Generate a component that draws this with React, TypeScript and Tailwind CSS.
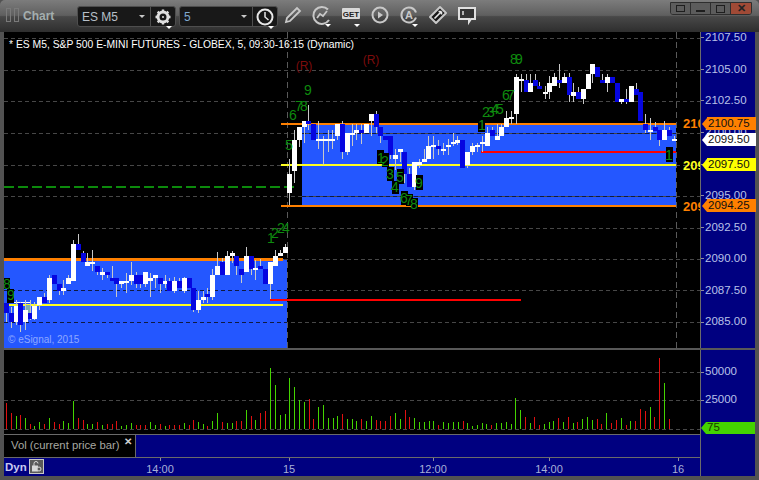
import React from "react";

type C = [number, number, number, number, number, "w" | "b"];

// x in 3x crop coordinates, y in 3x crop coordinates
const left: C[] = [
  [18,218,248,218,275,"b"],[32,248,275,230,295,"b"],[47,228,275,210,285,"w"],[61,220,285,215,305,"b"],[76,240,275,210,300,"w"],[90,250,267,210,270,"b"],[103,228,267,215,270,"w"],[118,202,226,202,240,"w"],[133,202,218,190,218,"b"],[148,145,210,135,218,"w"],[163,135,162,135,162,"b"],[176,162,182,162,195,"b"],[190,175,182,150,195,"w"],[205,145,162,135,162,"w"],[220,42,152,30,152,"w"],[235,42,60,12,60,"b"],[248,70,95,62,95,"b"],[262,97,107,70,107,"w"],[277,95,100,60,122,"w"],[292,108,125,108,135,"b"],[307,125,135,115,150,"w"],[321,125,135,125,145,"b"],[335,145,152,108,152,"b"],[349,145,162,145,200,"b"],[364,152,162,152,175,"w"],[379,152,158,130,190,"w"],[393,135,152,97,165,"w"],[407,135,162,125,175,"b"],[421,135,162,135,175,"b"],[436,127,162,127,170,"w"],[451,145,152,130,200,"w"],[466,135,143,135,175,"w"],[480,145,162,145,190,"b"],[494,152,162,135,175,"w"],[508,152,182,145,182,"b"],[523,152,182,140,190,"w"],[537,152,175,145,175,"b"],[552,145,182,140,190,"w"],[566,145,175,145,175,"b"],[580,175,240,175,245,"b"],[595,210,240,182,248,"w"],[610,202,210,182,218,"w"],[622,192,200,175,218,"b"],[637,135,200,118,210,"w"],[652,108,135,65,135,"w"],[667,97,135,85,135,"b"],[682,78,135,62,135,"w"],[695,70,78,62,100,"w"],[709,78,108,78,135,"b"],[723,118,135,118,160,"b"],[739,78,125,50,125,"w"],[753,78,118,78,135,"b"],[766,113,120,90,150,"w"],[781,108,118,88,118,"b"],[796,118,162,118,162,"b"],[811,97,162,97,210,"w"],[826,78,108,60,108,"w"],[840,70,78,60,78,"w"],[854,52,70,42,70,"w"],
];
const mid: C[] = [
  [58,372,430,327,466,"w"],[73,270,363,240,400,"w"],[88,232,270,232,290,"w"],[103,213,232,213,278,"w"],[115,213,222,165,240,"b"],[130,222,270,222,270,"b"],[145,267,273,213,297,"w"],[160,267,273,259,345,"w"],[175,267,273,240,306,"w"],[187,267,273,240,297,"w"],[202,222,258,222,270,"w"],[217,222,306,213,327,"b"],[232,249,306,249,315,"w"],[247,249,255,222,288,"w"],[259,240,249,222,270,"w"],[274,240,249,222,282,"b"],[289,222,249,222,249,"w"],[304,192,213,192,258,"w"],[319,192,231,183,249,"b"],[331,231,258,231,279,"b"],[346,258,270,258,270,"b"],[361,258,315,258,327,"b"],[376,315,327,297,360,"w"],[391,297,306,297,336,"w"],[403,306,372,306,400,"b"],[418,372,411,354,411,"b"],[433,336,411,336,420,"w"],[448,336,345,327,354,"w"],[463,327,336,297,336,"w"],[475,288,327,258,327,"w"],[490,285,291,258,327,"w"],[505,288,297,270,315,"b"],[520,297,303,279,315,"w"],[535,285,291,267,315,"w"],[550,276,282,249,288,"w"],[562,270,279,258,285,"w"],[577,270,354,270,354,"b"],[592,306,345,306,354,"w"],
];
const right: C[] = [
  [7,288,306,280,315,"w"],[22,285,291,279,306,"w"],[35,276,282,258,306,"w"],[50,249,288,231,288,"w"],[65,240,258,231,258,"b"],[80,258,270,222,270,"w"],[94,231,258,222,258,"w"],[107,204,231,183,231,"w"],[122,201,207,183,222,"w"],[137,81,192,72,222,"w"],[152,87,93,72,125,"w"],[167,90,125,72,125,"b"],[179,99,125,72,125,"w"],[194,90,108,72,108,"b"],[208,108,117,95,117,"b"],[224,126,132,108,147,"w"],[238,99,126,78,147,"w"],[251,81,108,70,108,"w"],[266,90,99,42,115,"b"],[281,81,99,70,99,"w"],[296,81,135,70,155,"b"],[310,126,138,99,155,"w"],[323,126,147,110,147,"b"],[338,117,147,117,162,"w"],[353,72,117,72,117,"w"],[367,42,72,42,99,"w"],[382,51,81,51,81,"b"],[395,90,99,72,99,"b"],[410,81,99,72,125,"w"],[425,81,99,81,99,"b"],[440,99,155,99,155,"b"],[453,147,155,147,162,"w"],[467,147,155,117,162,"b"],[482,108,155,108,155,"w"],[497,117,135,99,135,"b"],[511,126,213,126,213,"b"],[526,222,240,192,249,"b"],[541,240,246,204,270,"w"],[554,231,243,216,243,"b"],[568,240,270,240,288,"b"],[583,240,270,213,270,"w"],[598,240,258,231,258,"b"],[612,267,273,258,273,"w"],
];

const Candles = ({ data, ox, oy }: { data: C[]; ox: number; oy: number }) => (
  <>
    {data.map(([zx, t, b, wt, wb, c], i) => {
      const x = ox + Math.round(zx / 3);
      const top = oy + Math.round(t / 3);
      const bot = oy + Math.round(b / 3);
      return (
        <g key={i}>
          <rect x={x} y={oy + wt / 3} width={1} height={(wb - wt) / 3} fill="#c8c8c8" />
          <rect x={x - 2} y={top} width={5} height={Math.max(2, bot - top)} fill={c === "w" ? "#ffffff" : "#0606e0"} />
        </g>
      );
    })}
  </>
);

const boxes: [number, number, number, number][] = [
  [377,150,7,14],[382,153,7,14],[387,167,7,14],[397,169,7,15],[392,181,7,13],[416,175,7,15],[401,191,7,14],[406,194,7,12],[411,198,7,11],[478,120,7,12],[666,147,7,15],[4,278,6,11],[7,289,7,14],
];
const digits: [string, number, number][] = [
  ["9",308,95],["7",299,111],["8",304,111],["6",293,120],["5",289,150],["1",381,163],["2",385,166],["3",390,179],["5",400,182],["4",395,192],["9",419,188],["6",404,203],["7",409,205],["8",414,209],["1",482,130],["1",669,160],["2",486,117],["3",491,117],["4",495,114],["5",500,114],["6",506,100],["7",511,100],["8",514,64],["9",519,64],["8",7,289],["9",11,300],["1",271,243],["2",275,238],["2",281,233],["4",286,233],
];

const grid = [38, 70, 101, 133, 165, 196, 228, 259, 290, 322];

const MainChart = () => (
  <svg viewBox="4 32 696 316" width={696} height={316} shapeRendering="crispEdges" className="block">
    <rect x={4} y={32} width={696} height={316} fill="#000" />
    <rect x={4} y={259} width={283} height={89} fill="#2457ff" />
    <rect x={302} y={124} width={374} height={82} fill="#2457ff" />
    {grid.map((y) => (
      <line key={y} x1={4} x2={700} y1={y + 0.5} y2={y + 0.5} stroke="#474747" strokeDasharray="4 3" />
    ))}
    {[290, 322].map((y) => (
      <line key={y} x1={4} x2={287} y1={y + 0.5} y2={y + 0.5} stroke="#101a40" strokeDasharray="4 3" />
    ))}
    {[133, 196].map((y) => (
      <line key={y} x1={302} x2={676} y1={y + 0.5} y2={y + 0.5} stroke="#101a40" strokeDasharray="4 3" />
    ))}
    {[287, 676].map((x) => (
      <line key={x} x1={x + 0.5} x2={x + 0.5} y1={32} y2={348} stroke="#5a5a5a" strokeDasharray="6 4" />
    ))}
    <line x1={4} x2={295} y1={187} y2={187} stroke="#0c8a0c" strokeWidth={2} strokeDasharray="10 4" />
    <rect x={4} y={258} width={279} height={3} fill="#ff8000" />
    <rect x={281} y={123} width={395} height={2} fill="#ff8000" />
    <rect x={281} y={205} width={395} height={2} fill="#ff8000" />
    <rect x={9} y={304} width={274} height={2} fill="#ffff20" />
    <rect x={281} y={164} width={395} height={2} fill="#ffff20" />
    <rect x={481} y={151} width={195} height={2} fill="#ff0000" />
    <rect x={7} y={302} width={23} height={1} fill="#ffffff" />
    <rect x={25} y={305} width={5} height={8} fill="#7fb0b0" />
    <Candles data={left} ox={0} oy={230} />
    <Candles data={mid} ox={270} oy={50} />
    <Candles data={right} ox={470} oy={50} />
    <rect x={270} y={299} width={251} height={2} fill="#ff0000" />
    {boxes.map(([x, y, w, h], i) => (
      <rect key={i} x={x} y={y} width={w} height={h} fill="#000" />
    ))}
    <g shapeRendering="auto" fill="#0e8a0e" fontSize={14} textAnchor="middle">
      {digits.map(([d, x, y], i) => (
        <text key={i} x={x} y={y}>{d}</text>
      ))}
    </g>
    <g shapeRendering="auto">
      <text x={304} y={70} fill="#7d0c0c" fontSize={12} textAnchor="middle">(R)</text>
      <text x={371} y={64} fill="#7d0c0c" fontSize={12} textAnchor="middle">(R)</text>
      <text x={9} y={48} fill="#ffffff" fontSize={11} textLength={345} lengthAdjust="spacingAndGlyphs">* ES M5, S&amp;P 500 E-MINI FUTURES - GLOBEX, 5, 09:30-16:15 (Dynamic)</text>
      <text x={8} y={343} fill="#8fa8ff" fontSize={10}>© eSignal, 2015</text>
      <text x={683} y={128} fill="#ff8000" fontSize={13} fontWeight={700}>2100</text>
      <text x={683} y={170} fill="#ffff20" fontSize={13} fontWeight={700}>2097</text>
      <text x={683} y={211} fill="#ff8000" fontSize={13} fontWeight={700}>2094</text>
    </g>
  </svg>
);

type V = [number, number, "r" | "g"];
const vol1: V[] = [
  [19,160,"r"],[32,190,"r"],[47,198,"g"],[61,196,"r"],[76,205,"g"],[91,222,"r"],[103,228,"g"],[118,217,"g"],[133,222,"r"],[148,205,"g"],[163,217,"r"],[176,222,"r"],[190,213,"g"],[205,220,"g"],[220,153,"g"],[235,205,"r"],[248,211,"r"],[262,222,"g"],[277,222,"g"],[292,216,"r"],[307,225,"g"],[322,222,"r"],[335,222,"r"],[349,213,"r"],[364,228,"g"],[379,225,"g"],[393,219,"g"],[407,225,"r"],[421,225,"r"],[436,225,"r"],[451,216,"g"],[466,225,"g"],[480,222,"r"],[494,228,"g"],[508,225,"r"],[523,225,"r"],[537,225,"r"],[552,219,"g"],[566,225,"r"],[580,210,"r"],[595,216,"g"],[610,222,"g"],[622,228,"r"],[637,213,"g"],[652,190,"g"],[667,216,"r"],[682,219,"g"],[695,219,"g"],[709,213,"r"],[723,213,"r"],[739,180,"g"],[753,198,"r"],[766,210,"g"],[781,190,"r"],[796,183,"r"],[811,54,"g"],[826,105,"g"],[840,195,"g"],[854,192,"g"],[868,84,"g"],[883,111,"g"],[898,150,"g"],[913,156,"g"],[926,147,"r"],[940,207,"r"],[955,171,"g"],[970,165,"g"],[985,204,"g"],[998,204,"g"],[1012,198,"g"],[1027,192,"r"],[1042,207,"g"],[1056,207,"g"],[1069,213,"g"],[1084,207,"r"],[1098,213,"g"],[1114,198,"g"],[1128,210,"r"],
];
const vol2: V[] = [
  [1,213,"r"],[15,213,"r"],[31,198,"r"],[46,189,"g"],[61,207,"g"],[74,180,"r"],[88,201,"r"],[103,204,"g"],[118,216,"g"],[133,216,"g"],[146,213,"g"],[160,213,"g"],[175,225,"r"],[190,216,"g"],[205,219,"g"],[219,216,"g"],[233,216,"g"],[248,213,"r"],[262,219,"g"],[277,228,"g"],[292,225,"g"],[305,220,"g"],[319,222,"g"],[334,225,"r"],[349,219,"g"],[363,219,"g"],[377,216,"g"],[392,222,"g"],[406,144,"g"],[421,180,"g"],[436,201,"r"],[449,219,"g"],[463,201,"r"],[478,225,"r"],[493,222,"g"],[508,216,"g"],[520,213,"g"],[535,204,"r"],[550,216,"g"],[565,201,"r"],[580,219,"g"],[592,216,"r"],[607,207,"g"],[622,201,"g"],[637,210,"g"],[652,207,"r"],[664,222,"r"],[679,189,"g"],[694,219,"r"],[709,210,"r"],[724,204,"g"],[737,225,"r"],[751,213,"g"],[766,213,"r"],[781,177,"r"],[796,183,"r"],[811,171,"g"],[823,201,"r"],[838,24,"r"],[853,99,"g"],[868,207,"r"],
];

const VolChart = () => (
  <svg viewBox="4 350 696 84" width={696} height={84} shapeRendering="crispEdges" className="block">
    <rect x={4} y={350} width={696} height={84} fill="#000" />
    {[372, 400, 429].map((y) => (
      <line key={y} x1={4} x2={700} y1={y + 0.5} y2={y + 0.5} stroke="#474747" strokeDasharray="4 3" />
    ))}
    {[...vol1.map(([x, t, c]) => [Math.round(x / 3), t, c] as const), ...vol2.map(([x, t, c]) => [380 + Math.round(x / 3), t, c] as const)].map(([x, t, c], i) => (
      <rect key={i} x={x} y={350 + t / 3} width={1} height={(238 - t) / 3} fill={c === "r" ? "#e01010" : "#44d400"} />
    ))}
  </svg>
);

const Tri = ({ className }: { className: string }) => (
  <span className={`absolute w-0 h-0 border-x-[3px] border-x-transparent border-t-[3px] border-t-white ${className}`} />
);

const Icon = ({ children, drop }: { children: React.ReactNode; drop?: boolean }) => (
  <div className="relative w-[24px] h-[24px] flex items-center justify-center">
    <svg width={22} height={22} viewBox="0 0 22 22" fill="none" stroke="#c8c8c8" strokeWidth={2}>
      {children}
    </svg>
    {drop && <Tri className="right-[3px] bottom-[0px]" />}
  </div>
);

const Combo = ({ label, labelCls, icon, w }: { label: string; labelCls: string; icon: React.ReactNode; w: string }) => (
  <div className="flex h-[21px] w-[99px] rounded-[3px] border border-[#4e4e4e] bg-[#181818]">
    <div className={`relative ${w} flex items-center pl-[4px] border-r border-[#4e4e4e] text-[12px] ${labelCls}`}>
      {label}
      <span className="absolute right-[5px] top-[8px] w-0 h-0 border-x-[3px] border-x-transparent border-t-[3px] border-t-[#c8c8c8]" />
    </div>
    <div className="flex-1 flex items-center justify-center">{icon}</div>
  </div>
);

const gear = (
  <Icon drop>
    <circle cx={11} cy={11} r={5} strokeWidth={3} stroke="#e0e0e0" />
    <circle cx={11} cy={11} r={1} fill="#e0e0e0" stroke="none" />
    <g strokeWidth={2.4} stroke="#e0e0e0">
      <path d="M11 3.5v2M11 16.5v2M3.5 11h2M16.5 11h2M5.7 5.7l1.4 1.4M14.9 14.9l1.4 1.4M5.7 16.3l1.4-1.4M14.9 7.1l1.4-1.4" />
    </g>
  </Icon>
);
const clock = (
  <Icon drop>
    <circle cx={11} cy={11} r={7.5} stroke="#e8e8e8" />
    <path d="M11 6v5l3.5 3" stroke="#e8e8e8" strokeWidth={1.5} />
  </Icon>
);

const prices = ["2107.50", "2105.00", "2102.50", "2100.00", "2097.50", "2095.00", "2092.50", "2090.00", "2087.50", "2085.00"];

const Tag = ({ text, top, bg }: { text: string; top: string; bg: string }) => (
  <div className={`absolute left-[1px] ${top} flex items-center h-[13px] text-[11.5px] leading-none text-[#101010]`}>
    <span className={`w-0 h-0 border-y-[6.5px] border-y-transparent border-r-[5px] ${bg === "orange" ? "border-r-[#ff8000]" : bg === "white" ? "border-r-white" : "border-r-[#ffff00]"}`} />
    <span className={`w-[49px] h-[13px] flex items-center pl-[1px] ${bg === "orange" ? "bg-[#ff8000]" : bg === "white" ? "bg-white" : "bg-[#ffff00]"}`}>{text}</span>
  </div>
);

const TimeLabel = ({ text, w }: { text: string; w: string }) => (
  <div className={`${w} relative text-center`}>
    <span className="absolute left-1/2 top-[-1px] w-px h-[3px] bg-[#8a8aa0]" />
    <span className="pt-[5px] block">{text}</span>
  </div>
);

export default function App() {
  return (
    <div className="w-[759px] h-[480px] flex flex-col overflow-hidden bg-[#525252] [font-family:'Liberation_Sans',sans-serif]">
      <header className="h-[32px] shrink-0 flex items-start pt-[6px] rounded-t-[5px] bg-[linear-gradient(#7c7c7c_0%,#5f5f5f_48%,#484848_52%,#2e2e2e_100%)]">
        <div className="flex gap-[3px] pl-[6px] pt-[2px] w-[23px] box-content shrink-0">
          <span className="w-[5px] h-[14px] shrink-0 border border-[#7a7a7a]" />
          <span className="w-[5px] h-[14px] shrink-0 border border-[#7a7a7a]" />
        </div>
        <div className="w-[54px] shrink-0 -ml-[6px] h-[19px] flex items-center text-[12px] font-bold text-[#a4aeae]">Chart</div>
        <Combo label="ES M5" labelCls="text-[#b8c0c8]" icon={gear} w="w-[73px]" />
        <div className="w-[3px]" />
        <Combo label="5" labelCls="text-[#7fa8d0]" icon={clock} w="w-[73px]" />
        <div className="flex gap-[5px] ml-[3px] -mt-[3px]">
          <Icon>
            <path d="M5 14 15 4l3 3L8 17l-4 1z" strokeWidth={1.8} />
          </Icon>
          <Icon drop>
            <path d="M17 5.5A8.5 8.5 0 1 0 18 16" />
            <path d="M6 14l3-4 3 2 4-5" strokeWidth={1.8} />
          </Icon>
          <Icon drop>
            <rect x={2} y={4} width={18} height={11} rx={1} fill="#d8d8d8" stroke="none" />
            <text x={11} y={13} fontSize={8} fontWeight={700} fill="#222" stroke="none" textAnchor="middle">GET</text>
          </Icon>
          <Icon>
            <circle cx={11} cy={11} r={7.5} />
            <path d="M9 7.5v7l5-3.5z" fill="#c8c8c8" stroke="none" />
          </Icon>
          <Icon drop>
            <path d="M18 13.5A7.5 7.5 0 1 1 18 8.5" />
            <text x={11} y={15} fontSize={11} fontWeight={700} fill="#c8c8c8" stroke="none" textAnchor="middle">A</text>
          </Icon>
          <Icon>
            <path d="M3 13 13 3l6 6L9 19z" fill="#181818" stroke="#c8c8c8" strokeWidth={2} strokeLinejoin="round" />
            <path d="M7.5 14.5l7-7M14.5 7.5h-3M14.5 7.5v3" stroke="#e8e8e8" strokeWidth={1.6} />
          </Icon>
          <Icon>
            <path d="M3 4h16v11h-4l-2 3v-3H3z" fill="#333" stroke="#e0e0e0" />
            <path d="M7 7v4" stroke="#e0e0e0" strokeWidth={1.5} />
          </Icon>
        </div>
        <div className="ml-auto mr-[7px] -mt-[4px] flex h-[13px] rounded-b-[3px] border border-[#2e2e2e] overflow-hidden">
          <div className="w-[20px] flex items-center justify-center bg-[#5c5c5c] border-r border-[#2e2e2e]">
            <span className="w-[9px] h-[7px] border border-[#1e1e1e]" />
          </div>
          <div className="w-[20px] flex items-end justify-center pb-[2px] bg-[#5c5c5c] border-r border-[#2e2e2e]">
            <span className="w-[9px] h-[2px] bg-[#1e1e1e]" />
          </div>
          <div className="w-[20px] flex items-center justify-center bg-[#5c5c5c] border-r border-[#2e2e2e]">
            <span className="w-[9px] h-[8px] border border-[#1e1e1e]" />
          </div>
          <div className="w-[20px] flex items-center justify-center bg-[#a04a36] text-[11px] font-bold leading-none text-[#222]">✕</div>
        </div>
      </header>

      <main className="flex-1 flex flex-col pl-[4px] pr-[4px] pb-[4px] text-[11px] leading-none">
        <div className="flex h-[316px]">
          <MainChart />
          <div className="relative w-[55px] bg-[#000080] border-l border-[#6a6a6a] text-[#b8c0e8]">
            <div className="flex flex-col -mt-[10px]">
              {prices.map((p) => (
                <div key={p} className="h-[31.6px] flex items-center gap-[1px]">
                  <span className="w-[3px] h-px bg-[#8a8aa0]" />
                  <span className="text-[11.5px]">{p}</span>
                </div>
              ))}
            </div>
            <Tag text="2100.75" top="top-[85px]" bg="orange" />
            <Tag text="2099.50" top="top-[101px]" bg="white" />
            <Tag text="2097.50" top="top-[126px]" bg="yellow" />
            <Tag text="2094.25" top="top-[167px]" bg="orange" />
          </div>
        </div>
        <div className="h-[2px] bg-[#585858]" />
        <div className="flex flex-1">
          <div className="w-[696px] flex flex-col">
            <VolChart />
            <div className="h-[23px] flex border-t border-[#6a6a6a] bg-[#000080]">
              <div className="relative w-[132px] h-full bg-black border-r border-[#6a6a6a] flex items-center pl-[7px] text-[11.3px] text-[#a8a8a0]">
                Vol (current price bar)
                <span className="absolute right-[3px] top-[2px] text-[10px] font-bold text-[#d0d0d0]">✕</span>
              </div>
            </div>
            <div className="flex-1 flex items-start bg-[#000080] border-t border-[#6a6a6a] text-[11px] text-[#a8b0d8] pt-[1px]">
              <div className="w-[25px] pl-[1px] pt-[3px] text-[11.5px] font-bold text-[#c8c8f0]">Dyn</div>
              <div className="w-[15px] h-[15px] border border-[#c8c8c8] bg-[#5a5a5a] flex items-center justify-center">
                <svg width={11} height={11} viewBox="0 0 11 11" fill="none" stroke="#d8d8d8">
                  <path d="M3 5V2.5a2 2 0 0 1 4 0" />
                  <rect x={1.5} y={5} width={5} height={5} fill="#d8d8d8" />
                  <circle cx={8} cy={8} r={2} fill="#5a5a5a" />
                </svg>
              </div>
              <div className="w-[96px]" />
              <TimeLabel text="14:00" w="w-[40px]" />
              <div className="w-[89px]" />
              <TimeLabel text="15" w="w-[40px]" />
              <div className="w-[104px]" />
              <TimeLabel text="12:00" w="w-[40px]" />
              <div className="w-[76px]" />
              <TimeLabel text="14:00" w="w-[40px]" />
              <div className="w-[89px]" />
              <TimeLabel text="16" w="w-[40px]" />
            </div>
          </div>
          <div className="relative w-[55px] bg-[#000080] border-l border-[#6a6a6a] text-[11.5px] text-[#b8c0e8]">
            <div className="flex items-center h-[44px] gap-[1px]">
              <span className="w-[3px] h-px bg-[#8a8aa0]" />50000
            </div>
            <div className="flex items-center h-[12px] gap-[1px]">
              <span className="w-[3px] h-px bg-[#8a8aa0]" />25000
            </div>
            <div className="absolute left-0 top-[72px] flex items-center h-[12px] text-[#1c3a00]">
              <span className="w-0 h-0 border-y-[6px] border-y-transparent border-r-[5px] border-r-[#44d400]" />
              <span className="w-[49px] h-[12px] bg-[#44d400] flex items-center pl-[1px]">75</span>
            </div>
          </div>
        </div>
      </main>
    </div>
  );
}
